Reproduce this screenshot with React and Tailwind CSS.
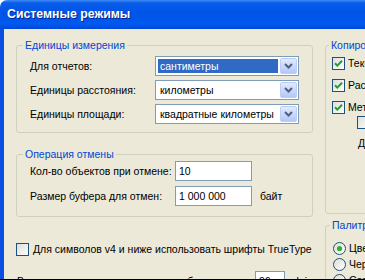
const FONT = "font-['Liberation_Sans',Arial,sans-serif]"

function CheckBox({ checked }) {
  return (
    <svg width="13" height="13" viewBox="0 0 13 13" className="shrink-0">
      <defs>
        <linearGradient id="cbg" x1="0" y1="0" x2="1" y2="1">
          <stop offset="0" stopColor="#DCDCD7" />
          <stop offset="1" stopColor="#FFFFFF" />
        </linearGradient>
      </defs>
      <rect x="0.5" y="0.5" width="12" height="12" fill="url(#cbg)" stroke="#1C5180" />
      {checked && <path d="M3 6.2 L5.3 8.6 L10 3.8" fill="none" stroke="#21A121" strokeWidth="2" />}
    </svg>
  )
}

function Radio({ checked }) {
  return (
    <svg width="13" height="13" viewBox="0 0 13 13" className="shrink-0">
      <defs>
        <linearGradient id="rbg" x1="0" y1="0" x2="1" y2="1">
          <stop offset="0" stopColor="#DCDCD7" />
          <stop offset="1" stopColor="#FFFFFF" />
        </linearGradient>
      </defs>
      <circle cx="6.5" cy="6.5" r="6" fill="url(#rbg)" stroke="#1C5180" />
      {checked && <circle cx="6.5" cy="6.5" r="2.6" fill="#2FB12F" />}
    </svg>
  )
}

function Combo({ value, selected }) {
  return (
    <div className="flex h-[20px] w-[144px] items-stretch border border-[#7F9DB9] bg-white p-[1px]">
      <div className={selected ? "my-[1px] ml-[1px] flex flex-1 items-center bg-[#316AC5] pl-[2px] text-white" : "flex flex-1 items-center pl-[3px] text-black"}>
        {value}
      </div>
      <div className="ml-[2px] flex w-[17px] items-center justify-center rounded-[2px] border border-[#BCCEF8] bg-gradient-to-b from-[#E1EAFE] to-[#B4C8F6]">
        <svg width="9" height="6" viewBox="0 0 9 6">
          <path d="M1 1 L4.5 4.5 L8 1" fill="none" stroke="#4D6185" strokeWidth="2" />
        </svg>
      </div>
    </div>
  )
}

function Field({ value, width = "w-[77px]" }) {
  return (
    <div className={"flex h-[20px] shrink-0 items-center border border-[#7F9DB9] bg-white pl-[3px] text-black " + width}>
      {value}
    </div>
  )
}

function Group({ title, className, legend, children }) {
  return (
    <fieldset className={"shrink-0 rounded-[3px] border border-[#D0D0BF] " + className}>
      <legend className={"px-[2px] leading-[13px] text-[#0046D5] " + legend}>{title}</legend>
      {children}
    </fieldset>
  )
}

export default function App() {
  return (
    <div className={"flex h-[280px] w-[365px] flex-col overflow-hidden whitespace-nowrap bg-white text-[10.5px] leading-[13px] text-black " + FONT}>
      <div className="flex h-[29px] shrink-0 items-center rounded-tl-[7px] bg-[linear-gradient(to_bottom,#3F8EF6_0%,#0A5CEA_10%,#0055E6_45%,#0059EF_85%,#0046D4_100%)] pl-[7px]">
        <span className="text-[12.3px] font-bold text-white [text-shadow:1px_1px_0_#0A1E8C]">Системные режимы</span>
      </div>
      <div className="flex min-h-0 flex-1 overflow-hidden border-l-[4px] border-[#0A4FE2] bg-[#ECE9D8]">
        <div className="ml-[12px] flex w-[297px] shrink-0 flex-col pt-[10px]">
          <Group title="Единицы измерения" className="px-[13px] pb-[8px]" legend="-ml-[7px]">
            <div className="mt-[4px] flex flex-col gap-[4px]">
              <div className="flex items-center justify-between">
                <span>Для отчетов:</span>
                <Combo value="сантиметры" selected />
              </div>
              <div className="flex items-center justify-between">
                <span>Единицы расстояния:</span>
                <Combo value="километры" />
              </div>
              <div className="flex items-center justify-between">
                <span>Единицы площади:</span>
                <Combo value="квадратные километры" />
              </div>
            </div>
          </Group>
          <Group title="Операция отмены" className="mt-[15px] px-[13px] pb-[10px]" legend="-ml-[7px]">
            <div className="flex flex-col gap-[5px]">
              <div className="flex items-center">
                <span className="w-[145px]">Кол-во объектов при отмене:</span>
                <Field value="10" />
              </div>
              <div className="flex items-center">
                <span className="w-[145px]">Размер буфера для отмен:</span>
                <Field value="1 000 000" />
                <span className="ml-[8px]">байт</span>
              </div>
            </div>
          </Group>
          <div className="mt-[26px] flex shrink-0 items-center gap-[4px]">
            <CheckBox />
            <span>Для символов v4 и ниже использовать шрифты TrueType</span>
          </div>
          <div className="mt-[15px] flex shrink-0 items-center pl-[1px]">
            <span className="w-[238px]">Величина экранного разрешения об</span>
            <Field value="96" width="w-[30px]" />
            <span className="ml-[8px]">dpi</span>
          </div>
        </div>
        <div className="ml-[12px] flex w-[140px] shrink-0 flex-col pt-[10px]">
          <Group title="Копирование" className="h-[175px] pl-[6px]" legend="-ml-[3px]">
            <div className="mt-[5px] flex flex-col gap-[9px]">
              <div className="flex items-center gap-[3px]">
                <CheckBox checked />
                <span>Текст</span>
              </div>
              <div className="flex items-center gap-[3px]">
                <CheckBox checked />
                <span>Растр</span>
              </div>
              <div className="flex items-center gap-[3px]">
                <CheckBox checked />
                <span>Метафайл</span>
              </div>
            </div>
            <div className="ml-[25px] mt-[2px] flex items-center gap-[3px]">
              <CheckBox />
              <span>Сжатие</span>
            </div>
            <div className="ml-[26px] mt-[8px]">Дополнительно</div>
          </Group>
          <Group title="Палитра" className="mt-[5px] pl-[7px]" legend="-ml-[3px]">
            <div className="mt-[10px] flex flex-col gap-[3px]">
              <div className="flex items-center gap-[3px]">
                <Radio checked />
                <span>Цветная</span>
              </div>
              <div className="flex items-center gap-[3px]">
                <Radio />
                <span>Черно-белая</span>
              </div>
              <div className="flex items-center gap-[3px]">
                <Radio />
                <span>Серая</span>
              </div>
            </div>
          </Group>
        </div>
      </div>
      <div className="h-[1px] shrink-0 bg-black" />
    </div>
  )
}
